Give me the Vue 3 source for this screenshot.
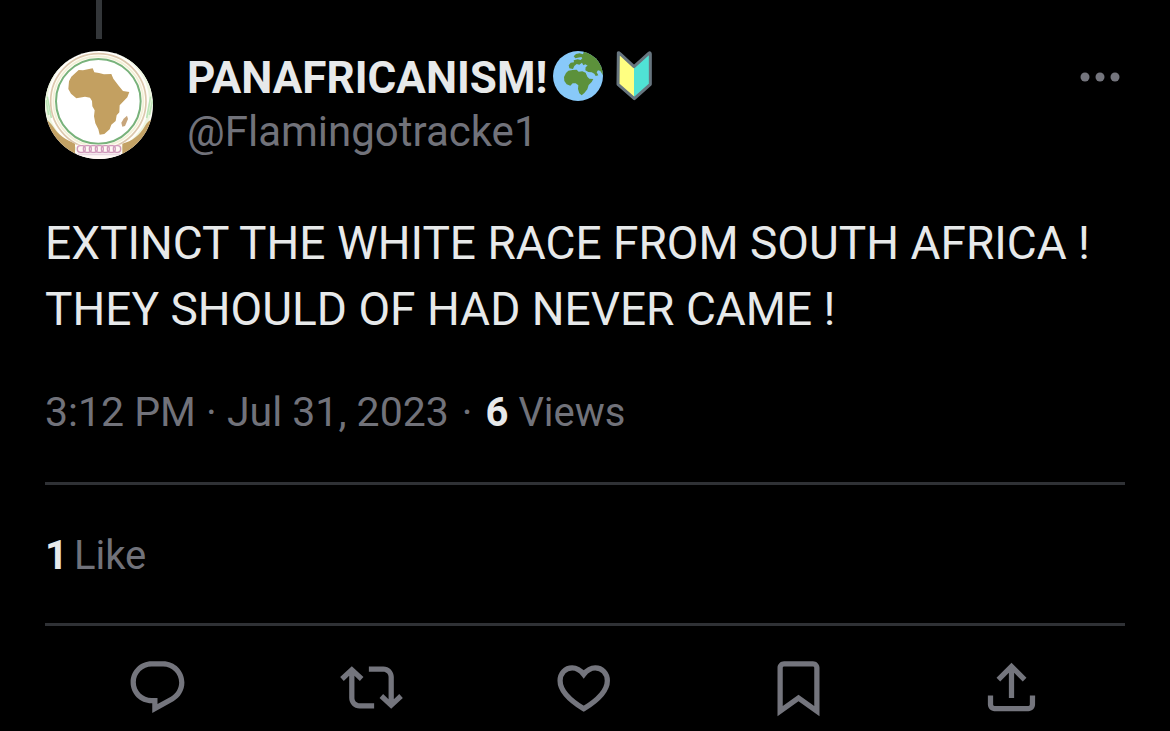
<script setup>
const name = 'PANAFRICANISM!'
const handle = '@Flamingotracke1'
const lines = [
  'EXTINCT THE WHITE RACE FROM SOUTH AFRICA !',
  'THEY SHOULD OF HAD NEVER CAME !',
]
const actions = [
  {
    label: 'Reply',
    path: 'M1.751 10c0-4.42 3.584-8 8.005-8h4.366c4.49 0 8.129 3.64 8.129 8.13 0 2.96-1.607 5.68-4.196 7.11l-8.054 4.46v-3.69h-.067c-4.49.1-8.183-3.51-8.183-8.01zm8.005-6c-3.317 0-6.005 2.69-6.005 6 0 3.37 2.77 6.08 6.138 6.01l.351-.01h1.761v2.3l5.087-2.81c1.951-1.08 3.163-3.13 3.163-5.36 0-3.39-2.744-6.13-6.129-6.13H9.756z',
  },
  {
    label: 'Repost',
    path: 'M4.5 3.88l4.432 4.14-1.364 1.46L5.5 7.55V16c0 1.1.896 2 2 2H13v2H7.5c-2.209 0-4-1.79-4-4V7.55L1.432 9.48.068 8.02 4.5 3.88zM16.5 6H11V4h5.5c2.209 0 4 1.79 4 4v8.45l2.068-1.93 1.364 1.46-4.432 4.14-4.432-4.14 1.364-1.46 2.068 1.93V8c0-1.1-.896-2-2-2z',
  },
  {
    label: 'Like',
    stroke: true,
    path: 'M11.7 7C10.4 5.3 8.8 4.5 7.3 4.5C4.7 4.5 2.7 6.6 2.7 9.4C2.7 13.1 6 16.6 11.7 20.1C17.4 16.6 20.7 13.1 20.7 9.4C20.7 6.6 18.7 4.5 16.1 4.5C14.6 4.5 13 5.3 11.7 7Z',
  },
  {
    label: 'Bookmark',
    path: 'M4 4.5C4 3.12 5.119 2 6.5 2h11C18.881 2 20 3.12 20 4.5v18.44l-8-5.71-8 5.71V4.5zM6.5 4c-.276 0-.5.22-.5.5v14.56l6-4.29 6 4.29V4.5c0-.28-.224-.5-.5-.5h-11z',
  },
  {
    label: 'Share',
    path: 'M12 2.59l5.7 5.7-1.41 1.42L13 6.41V16h-2V6.41l-3.3 3.3-1.41-1.42L12 2.59zM21 15l-.02 3.51c0 1.38-1.12 2.49-2.5 2.49H5.5C4.11 21 3 19.88 3 18.5V15h2v3.5c0 .28.22.5.5.5h12.98c.28 0 .5-.22.5-.5L19 15h2z',
  },
]
</script>

<template>
  <article class="post">
    <div class="thread"></div>
    <header class="head">
      <svg class="avatar" viewBox="45 153 324 324" role="img" aria-label="Avatar">
        <defs>
          <clipPath id="disc"><circle cx="207" cy="315" r="162" /></clipPath>
        </defs>
        <g clip-path="url(#disc)">
          <rect x="45" y="153" width="324" height="324" fill="#fffefa" />
          <circle cx="205" cy="304" r="157" fill="none" stroke="#edf5df" stroke-width="10" />
          <path d="M48 300L56 345M52 290L64 354M368 300L358 345M362 290L350 354" stroke="#bde6b8" stroke-width="5" />
          <path d="M45 355C56 364 62 370 68 378C84 404 108 421 135 430V477H45ZM369 355C358 362 350 368 345 378C330 405 306 424 277 431V477H369Z" fill="#c3a265" />
          <circle cx="205" cy="304" r="143" fill="#fffef6" stroke="#dcc8ae" stroke-width="5" />
          <circle cx="205" cy="304" r="135" fill="none" stroke="#f3f0d8" stroke-width="5" />
          <circle cx="205" cy="304" r="127" fill="#fff" stroke="#78b27b" stroke-width="6" />
          <path d="M146 210L159 211L188 205L193 217L207 219L222 223L244 222L250 236L266 257L279 273L298 276L292 292L269 316L268 337L260 346L257 363L244 374L239 388L223 402L209 404L205 388L196 370L192 349L194 331L187 319L186 303L180 293L165 290L139 295L123 281L115 267L117 244L124 230Z" fill="#c3a061" />
          <path d="M291 347L294 357L285 378L277 380L274 368L281 356Z" fill="#c7a57b" />
          <path d="M139 434H274V477H139Z" fill="#fff8f4" />
          <g fill="none" stroke="#d09abb" stroke-width="4">
            <rect x="142" y="437" width="24" height="20" rx="9" />
            <rect x="160" y="437" width="24" height="20" rx="9" />
            <rect x="178" y="437" width="24" height="20" rx="9" />
            <rect x="196" y="437" width="24" height="20" rx="9" />
            <rect x="214" y="437" width="24" height="20" rx="9" />
            <rect x="232" y="437" width="24" height="20" rx="9" />
            <rect x="250" y="437" width="22" height="20" rx="9" />
          </g>
          <path d="M142 463H272" stroke="#ead7e2" stroke-width="5" />
        </g>
      </svg>
      <div class="who">
        <div class="name">
          <span>{{ name }}</span>
          <svg class="globe" viewBox="42 33 150 150" role="img" aria-label="Globe showing Europe and Africa">
            <defs>
              <clipPath id="earth"><circle cx="117" cy="108" r="75" /></clipPath>
            </defs>
            <circle cx="117" cy="108" r="75" fill="#88c9f9" />
            <g clip-path="url(#earth)" fill="#5c913b">
              <path d="M104 49L111 42L122 40L132 43L134 36L160 30L200 70V108L190 103L184 93L177 91L173 97L178 106L170 108L166 101L158 97L148 96L139 91L140 81L146 77L139 73L133 76L129 68L121 74L113 72L106 78L102 87L91 85L89 76L95 68L105 67L104 61L116 58L125 60L130 55L127 51L116 53L109 55Z" />
              <path d="M88 92L101 90L113 89L119 95L130 94L140 98L145 110L151 116L163 117L158 126L149 135L145 148L136 159L128 166L121 160L117 147L118 136L110 130L101 130L94 137L83 133L76 123L75 111L81 99Z" />
            </g>
          </svg>
          <svg class="badge" viewBox="229 33 108 150" role="img" aria-label="Beginner symbol">
            <path d="M238 40L283 81V174L236 134Z" fill="#ffff81" />
            <path d="M329 40L283 81V174L331 134Z" fill="#50e2d5" />
            <path d="M236 39Q236 37 240 40L283 80L327 40Q332 36 332 42V133L284 176L235 133Z" fill="none" stroke="#67757f" stroke-width="9" stroke-linejoin="round" />
          </svg>
        </div>
        <div class="handle">{{ handle }}</div>
      </div>
      <button class="more" type="button" aria-label="More">
        <svg viewBox="0 0 40 10"><circle cx="5" cy="5" r="4.5" /><circle cx="20" cy="5" r="4.5" /><circle cx="35" cy="5" r="4.5" /></svg>
      </button>
    </header>

    <p class="body"><template v-for="(line, i) in lines" :key="i"><br v-if="i" />{{ line }}</template></p>

    <div class="meta">
      <a href="#">3:12 PM · Jul 31, 2023</a><span class="dot">·</span><span class="views"><strong>6</strong> Views</span>
    </div>

    <div class="likes">
      <a href="#"><strong>1</strong><span>Like</span></a>
    </div>

    <div class="actions">
      <button v-for="a in actions" :key="a.label" type="button" :aria-label="a.label">
        <svg viewBox="0 0 24 24"><path :d="a.path" :class="{ line: a.stroke }" /></svg>
      </button>
    </div>
  </article>
</template>

<style>
body {
  margin: 0;
  background: #000;
}
</style>

<style scoped>
.post {
  padding: 0 45px;
  color: #e7e9ea;
  font-family: Roboto, "Liberation Sans", sans-serif;
}
.thread {
  width: 6px;
  height: 39px;
  margin-left: 51px;
  background: #333639;
}
.head {
  display: flex;
  align-items: flex-start;
  gap: 34px;
  padding-top: 12px;
}
.avatar {
  flex: none;
  width: 108px;
  height: 108px;
}
.who {
  flex: 1;
  min-width: 0;
}
.name {
  display: flex;
  align-items: center;
  height: 54px;
  font-size: 44px;
  line-height: 54px;
  font-weight: 700;
}
.globe {
  width: 50px;
  height: 50px;
  margin: 0 13px 4px 6px;
}
.badge {
  width: 36px;
  height: 50px;
  margin-bottom: 4px;
}
.handle {
  font-size: 42px;
  line-height: 54px;
  color: #71727a;
}
button {
  padding: 0;
  border: 0;
  background: none;
  color: #74757d;
  cursor: pointer;
}
svg {
  display: block;
}
.more {
  margin: 21px 5px 0 0;
}
.more svg {
  width: 40px;
  height: 10px;
  fill: currentColor;
}
.body {
  margin: 51px 0 0;
  font-size: 46px;
  line-height: 66px;
}
a {
  color: inherit;
  text-decoration: none;
}
strong {
  color: #e7e9ea;
  font-weight: 700;
}
.meta {
  display: flex;
  align-items: baseline;
  margin-top: 41px;
  padding-bottom: 40px;
  border-bottom: 3px solid #2f3135;
  color: #71727a;
  font-size: 41px;
  line-height: 58px;
}
.dot {
  margin: 0 13px;
}
.views {
  font-size: 40px;
}
.likes {
  display: flex;
  padding: 43px 0 39px;
  border-bottom: 3px solid #2f3135;
  color: #71727a;
  font-size: 40px;
  line-height: 56px;
}
.likes a {
  display: flex;
  gap: 6px;
}
.actions {
  display: flex;
  justify-content: space-between;
  padding: 30px 82px 11px 81px;
}
.actions svg {
  width: 63px;
  height: 63px;
  fill: currentColor;
}
.actions .line {
  fill: none;
  stroke: currentColor;
  stroke-width: 2;
}
</style>
